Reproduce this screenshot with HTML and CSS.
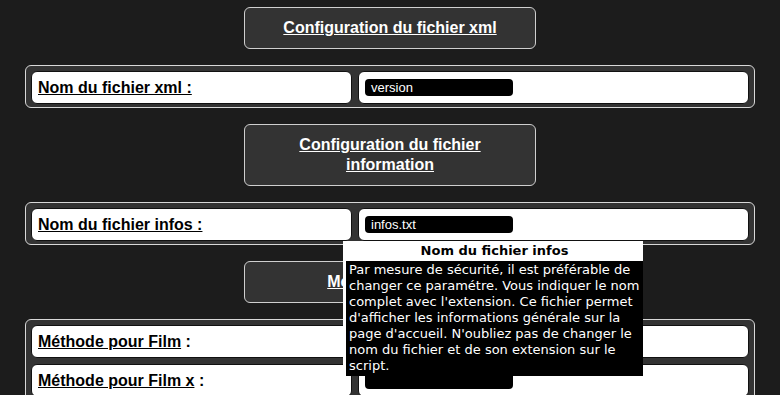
FILE: index.html
```html
<!DOCTYPE HTML>
<html>
<head>
<meta http-equiv="Content-Type" content="text/html; charset=utf-8">
<title>Configuration</title>
<link rel="stylesheet" href="styles.css">
</head>
<body>
	<div class="page">
		<div class="titre"><u>Configuration du fichier xml</u></div>
		<div class="bloc">
			<div class="cellule"><span class="label"><u>Nom du fichier xml :</u></span></div>
			<div class="cellule"><div class="champ">version</div></div>
		</div>

		<div class="titre"><u>Configuration du fichier information</u></div>
		<div class="bloc">
			<div class="cellule"><span class="label"><u>Nom du fichier infos :</u></span></div>
			<div class="cellule"><div class="champ">infos.txt</div></div>
		</div>

		<div class="titre"><u>Méthode d'envoi</u></div>
		<div class="bloc">
			<div class="cellule"><span class="label"><u>Méthode pour Film</u> :</span></div>
			<div class="cellule"><div class="champ"></div></div>
			<div class="cellule"><span class="label"><u>Méthode pour Film x</u> :</span></div>
			<div class="cellule"><div class="champ"></div></div>
		</div>
	</div>

	<!-- info-bulle -->
	<div class="bulle">
		<div class="bulle-titre">Nom du fichier infos</div>
		<div class="bulle-texte">Par mesure de sécurité, il est préférable de changer ce paramétre. Vous indiquer le nom complet avec l'extension. Ce fichier permet d'afficher les informations générale sur la page d'accueil. N'oubliez pas de changer le nom du fichier et de son extension sur le script.</div>
	</div>
</body>
</html>
```

FILE: styles.css
```css
html, body {
	background: #1c1c1c;
}
body {
	margin: 7px 0 0 0;
	font-family: "Liberation Sans", Arial, sans-serif;
	overflow: hidden;
}

.page {
	width: 730px;
	margin: 0 auto;
	display: flex;
	flex-direction: column;
	align-items: center;
	gap: 16px;
}

/* titres des sections */
.titre {
	box-sizing: border-box;
	width: 292px;
	padding: 10px 30px;
	background: #333;
	border: 1px solid #cfcfcf;
	border-radius: 6px;
	color: #fff;
	font-weight: bold;
	font-size: 16px;
	line-height: 20px;
	text-align: center;
}

.bloc {
	box-sizing: border-box;
	width: 730px;
	display: grid;
	grid-template-columns: 321px 1fr;
	gap: 6px 6px;
	padding: 5px 5px 3px;
	background: #333;
	border: 1px solid #d8d8d8;
	border-radius: 6px;
}

.cellule {
	height: 33px;
	box-sizing: border-box;
	display: flex;
	align-items: center;
	padding-left: 6px;
	background: #fff;
	border: 1px solid #111;
	border-radius: 6px;
}

.label {
	color: #000;
	font-weight: bold;
	font-size: 16px;
}

.champ {
	width: 148px;
	height: 17px;
	box-sizing: border-box;
	padding-left: 6px;
	background: #000;
	border-radius: 4px;
	color: #fff;
	font-size: 13px;
	line-height: 17px;
}

/* info-bulle au survol */
.bulle {
	position: absolute;
	left: 343px;
	top: 241px;
	width: 300px;
	box-sizing: border-box;
	background: #fff;
	padding: 0 0 0 3px;
	font-family: "DejaVu Sans", Verdana, sans-serif;
}
.bulle-titre {
	color: #000;
	font-weight: bold;
	font-size: 13px;
	line-height: 20px;
	text-align: center;
}
.bulle-texte {
	background: #000;
	color: #fff;
	font-size: 13px;
	line-height: 16px;
	padding: 1px 2px 2px 3px;
}
```
